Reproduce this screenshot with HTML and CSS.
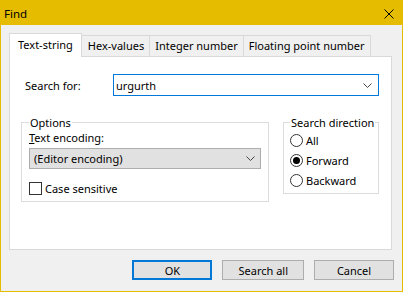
FILE: index.html
```html
<!DOCTYPE html>
<html lang="en">
<head>
	<meta charset="UTF-8">
	<title>Find</title>
	<link rel="stylesheet" href="styles.css">
</head>
<body>
	<div class="window">
		<!-- Title bar -->
		<div class="titlebar">
			<span class="title">Find</span>
			<svg class="close" width="10" height="10" viewBox="0 0 10 10">
				<path d="M0.5 0.5 L9.5 9.5 M9.5 0.5 L0.5 9.5" stroke="#000" stroke-width="1" fill="none"/>
			</svg>
		</div>

		<div class="client">
			<!-- Tabs -->
			<div class="tabs">
				<div class="tab active">Text-string</div>
				<div class="tab">Hex-values</div>
				<div class="tab">Integer number</div>
				<div class="tab">Floating point number</div>
			</div>

			<div class="panel">
				<div class="search-row">
					<label class="search-label" for="search">Search for:</label>
					<div class="combo edit">
						<input type="text" id="search" value="urgurth">
						<svg class="chevron" width="9" height="5" viewBox="0 0 9 5">
							<path d="M0.5 0.5 L4.5 4.5 L8.5 0.5" stroke="#444" stroke-width="1" fill="none"/>
						</svg>
					</div>
				</div>

				<div class="groups">
					<fieldset class="group options">
						<legend>Options</legend>
						<div class="field-label"><u>T</u>ext encoding:</div>
						<div class="combo dropdown">
							<span>(Editor encoding)</span>
							<svg class="chevron" width="9" height="5" viewBox="0 0 9 5">
								<path d="M0.5 0.5 L4.5 4.5 L8.5 0.5" stroke="#444" stroke-width="1" fill="none"/>
							</svg>
						</div>
						<label class="check"><input type="checkbox">Case sensitive</label>
					</fieldset>

					<fieldset class="group direction">
						<legend>Search direction</legend>
						<label class="radio"><input type="radio" name="dir">All</label>
						<label class="radio"><input type="radio" name="dir" checked>Forward</label>
						<label class="radio"><input type="radio" name="dir">Backward</label>
					</fieldset>
				</div>
			</div>

			<!-- Buttons -->
			<div class="buttons">
				<button class="default">OK</button>
				<button>Search all</button>
				<button>Cancel</button>
			</div>
		</div>
	</div>
</body>
</html>
```

FILE: styles.css
```css
* {
	box-sizing: border-box;
}

body {
	margin: 0;
	font-family: "Noto Sans", sans-serif;
	font-size: 11px;
	color: #000;
}

.window {
	width: 403px;
	height: 292px;
	border: 1px solid #e6bc00;
	border-top: none;
	display: flex;
	flex-direction: column;
	background: #f0f0f0;
}

.titlebar {
	height: 25px;
	background: #e6bc00;
	display: flex;
	align-items: center;
	padding: 0 9px 0 4px;
	margin: 0 -1px;
}
.title {
	flex: 1;
	font-size: 11.5px;
	padding-top: 1px;
}
.close {
	display: block;
	margin-top: 2px;
}

.client {
	flex: 1;
	padding: 8px 8px 0 8px;
	display: flex;
	flex-direction: column;
}

/* Tabs */
.tabs {
	display: flex;
	align-items: flex-end;
	height: 23px;
}
.tab {
	height: 21px;
	line-height: 19px;
	padding: 0 5px;
	border: 1px solid #d9d9d9;
	border-bottom: none;
	margin-left: -1px;
	background: #f0f0f0;
}
.tab.active {
	height: 24px;
	line-height: 21px;
	margin-left: 0;
	margin-bottom: -1px;
	padding: 0 8px;
	background: #fff;
	position: relative;
	z-index: 1;
}
.tab.active + .tab {
	margin-left: 0;
	border-left: none;
	padding-left: 6px;
}

.panel {
	height: 194px;
	margin-right: 2px;
	background: #fff;
	border: 1px solid #d9d9d9;
}

/* Search for */
.search-row {
	display: flex;
	align-items: center;
	margin: 17px 12px 0 15px;
}
.search-label {
	width: 88px;
}
.combo {
	display: flex;
	align-items: center;
	padding: 0 6px 0 2px;
}
.combo.edit {
	flex: 1;
	height: 22px;
	border: 1px solid #0078d7;
}
.combo input {
	flex: 1;
	border: none;
	outline: none;
	font: inherit;
	padding: 0;
	background: transparent;
}
.chevron {
	display: block;
	flex: none;
}

/* Group boxes */
.groups {
	display: flex;
	justify-content: space-between;
	align-items: flex-start;
	margin: 19px 12px 0 11px;
}
.group {
	margin: 0;
	border: 1px solid #dcdcdc;
	padding: 0 7px 5px 7px;
	min-width: 0;
}
.group legend {
	padding: 0 1px;
	line-height: 15px;
	white-space: nowrap;
}
.options {
	width: 248px;
}
.direction {
	width: 96px;
	padding: 0 6px 3px 6px;
}

.field-label {
	line-height: 15px;
}
.combo.dropdown {
	margin-top: 3px;
	height: 21px;
	background: #e1e1e1;
	border: 1px solid #adadad;
	padding: 0 5px 0 4px;
}
.combo.dropdown span {
	flex: 1;
}

.check,
.radio {
	display: flex;
	align-items: center;
	line-height: 15px;
}
.check {
	margin-top: 12px;
}
.radio {
	height: 20px;
}
.check input,
.radio input {
	-webkit-appearance: none;
	appearance: none;
	width: 13px;
	height: 13px;
	margin: 0 3px 0 0;
	border: 1px solid #333;
	background: #fff;
}
.radio input {
	border-radius: 50%;
	display: flex;
	align-items: center;
	justify-content: center;
}
.radio input:checked::after {
	content: "";
	width: 7px;
	height: 7px;
	border-radius: 50%;
	background: #000;
}

/* Buttons */
.buttons {
	display: flex;
	justify-content: flex-end;
	gap: 10px;
	margin-top: 10px;
}
button {
	height: 20px;
	min-width: 80px;
	padding: 0 15px;
	font: inherit;
	color: #000;
	background: #e1e1e1;
	border: 1px solid #adadad;
}
button.default {
	border: 2px solid #0078d7;
}
```
